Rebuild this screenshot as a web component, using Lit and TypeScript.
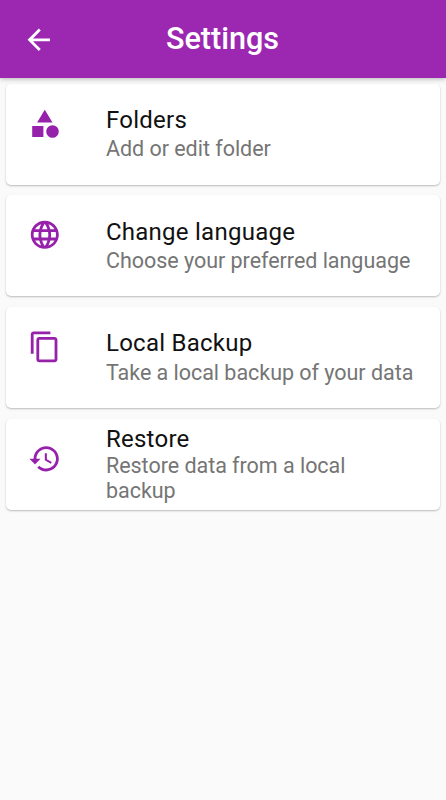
import { LitElement, html, css, svg } from "lit";
import { customElement } from "lit/decorators.js";

const icons = {
  back: "M20 11H7.83l5.59-5.59L12 4l-8 8 8 8 1.41-1.41L7.83 13H20v-2z",
  category: "M12 2l-5.5 9h11zM17.5 13a4.5 4.5 0 1 0 0 9 4.5 4.5 0 0 0 0-9zM3 13.5h8v8H3z",
  language:
    "M11.99 2C6.47 2 2 6.48 2 12s4.47 10 9.99 10C17.52 22 22 17.52 22 12S17.52 2 11.99 2zm6.93 6h-2.95c-.32-1.25-.78-2.45-1.38-3.56 1.84.63 3.37 1.91 4.33 3.56zM12 4.04c.83 1.2 1.48 2.53 1.91 3.96h-3.82c.43-1.43 1.08-2.76 1.91-3.96zM4.26 14C4.1 13.36 4 12.69 4 12s.1-1.36.26-2h3.38c-.08.66-.14 1.32-.14 2s.06 1.34.14 2H4.26zm.82 2h2.95c.32 1.25.78 2.45 1.38 3.56-1.84-.63-3.37-1.9-4.33-3.56zm2.95-8H5.08c.96-1.66 2.49-2.93 4.33-3.56C8.81 5.55 8.35 6.75 8.03 8zM12 19.96c-.83-1.2-1.48-2.53-1.91-3.96h3.82c-.43 1.43-1.08 2.76-1.91 3.96zM14.34 14H9.66c-.09-.66-.16-1.32-.16-2s.07-1.35.16-2h4.68c.09.65.16 1.32.16 2s-.07 1.34-.16 2zm.25 5.56c.6-1.11 1.06-2.31 1.38-3.56h2.95c-.96 1.65-2.49 2.93-4.33 3.56zM16.36 14c.08-.66.14-1.32.14-2s-.06-1.34-.14-2h3.38c.16.64.26 1.31.26 2s-.1 1.36-.26 2h-3.38z",
  copy: "M16 1H4c-1.1 0-2 .9-2 2v14h2V3h12V1zm3 4H8c-1.1 0-2 .9-2 2v14c0 1.1.9 2 2 2h11c1.1 0 2-.9 2-2V7c0-1.1-.9-2-2-2zm0 16H8V7h11v14z",
  restore:
    "M13 3c-4.97 0-9 4.03-9 9H1l3.89 3.89.07.14L9 12H6c0-3.87 3.13-7 7-7s7 3.13 7 7-3.13 7-7 7c-1.93 0-3.68-.79-4.94-2.06l-1.42 1.42C8.27 19.99 10.51 21 13 21c4.97 0 9-4.03 9-9s-4.03-9-9-9zm-1 5v5l4.28 2.54.72-1.21-3.5-2.08V8H12z",
};

const icon = (name: keyof typeof icons) =>
  html`<svg class="icon" viewBox="0 0 24 24" aria-hidden="true">${svg`<path d=${icons[name]}></path>`}</svg>`;

const items: { icon: keyof typeof icons; title: string; text: string; compact?: boolean }[] = [
  { icon: "category", title: "Folders", text: "Add or edit folder" },
  { icon: "language", title: "Change language", text: "Choose your preferred language" },
  { icon: "copy", title: "Local Backup", text: "Take a local backup of your data" },
  { icon: "restore", title: "Restore", text: "Restore data from a local backup", compact: true },
];

@customElement("app-root")
export class AppRoot extends LitElement {
  static styles = css`
    :host {
      display: block;
      min-height: 800px;
      background: #fafafa;
      font-family: Roboto, sans-serif;
    }
    .bar {
      position: relative;
      z-index: 1;
      display: grid;
      grid-template-columns: 78px 1fr 79px;
      align-items: center;
      height: 78px;
      background: #9c27b0;
      color: #fff;
      box-shadow: 0 1px 5px rgba(0, 0, 0, 0.28);
    }
    .back {
      display: flex;
      justify-content: center;
      padding: 1px 0 0;
      border: 0;
      background: none;
      color: inherit;
    }
    .icon {
      display: block;
      width: 33.6px;
      height: 33.6px;
      fill: currentColor;
    }
    h1 {
      margin: 0;
      text-align: center;
      font-size: 30.6px;
      font-weight: 500;
      line-height: 36px;
    }
    .list {
      display: flex;
      flex-direction: column;
      gap: 10.7px;
      padding: 6px 6px 0 5.6px;
    }
    .card {
      box-sizing: border-box;
      display: flex;
      height: 101px;
      padding: 22.2px 18px 0 22.1px;
      border-radius: 5px;
      background: #fff;
      box-shadow: 0 1px 2px rgba(0, 0, 0, 0.26);
    }
    .card:not(.compact) {
      margin-top: -0.3px;
      margin-bottom: 0.3px;
    }
    .card .icon {
      flex: none;
      margin-top: 0.8px;
      margin-right: 44.7px;
      color: #9621ab;
    }
    h2 {
      margin: 0;
      color: #111;
      font-size: 24px;
      font-weight: 400;
      line-height: 28px;
      letter-spacing: 0.25px;
    }
    p {
      margin: 2.3px 0 0;
      color: #757575;
      font-size: 21.5px;
      line-height: 26px;
      letter-spacing: -0.03px;
    }
    .card.compact {
      height: 91px;
      padding-top: 6px;
      padding-right: 50px;
    }
    .compact .icon {
      margin-top: 16.5px;
    }
    .compact p {
      margin-top: 0.3px;
      line-height: 25px;
    }
  `;

  render() {
    return html`
      <header class="bar">
        <button class="back" aria-label="Back">${icon("back")}</button>
        <h1>Settings</h1>
      </header>
      <main class="list">
        ${items.map(
          (item) => html`
            <section class="card ${item.compact ? "compact" : ""}">
              ${icon(item.icon)}
              <div>
                <h2>${item.title}</h2>
                <p>${item.text}</p>
              </div>
            </section>
          `
        )}
      </main>
    `;
  }
}
